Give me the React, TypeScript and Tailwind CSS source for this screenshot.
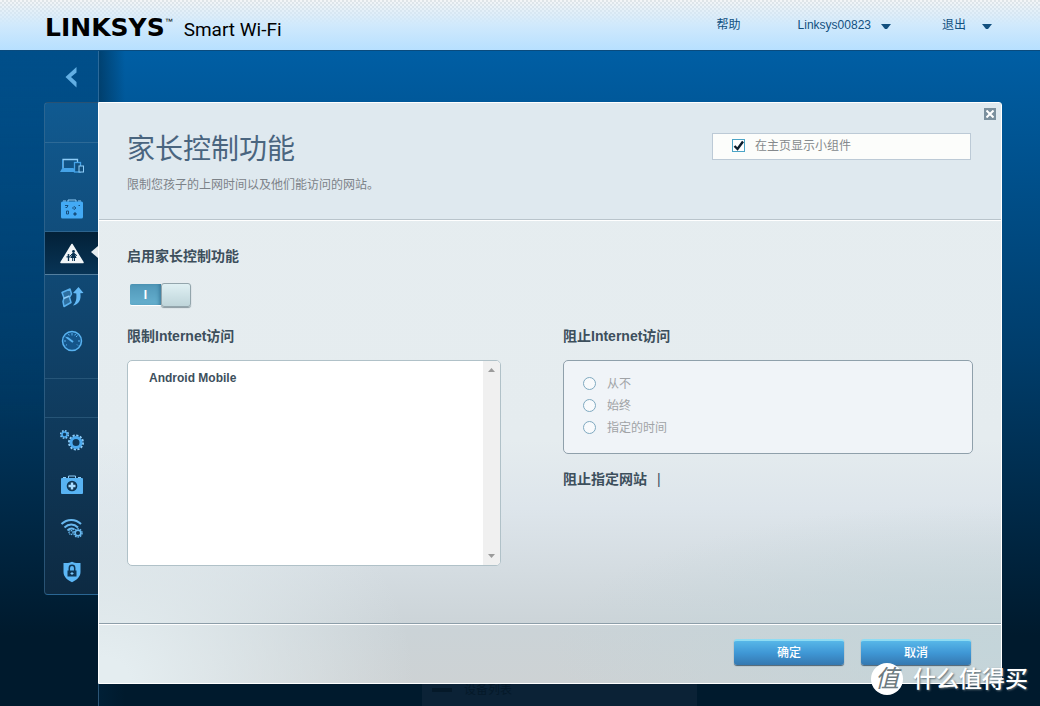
import React, { useState } from 'react';

const ICON = '#45a3e8';
const LIGHT = '#8fcdf8';

const DevicesIcon = () => (
  <svg width="24" height="16" viewBox="0 0 24 16" fill="none" stroke={ICON}>
    <path d="M3 11.500V2.500h14.500V5" stroke={LIGHT} strokeWidth="1.300" />
    <path d="M2.500 3v8.500h11" />
    <path d="M0 15l2-3.500h12V15z" fill={ICON} stroke="none" />
    <rect x="14.500" y="5.500" width="6" height="9.500" fill="#12507f" strokeWidth="1.300" />
    <rect x="19" y="9" width="4.500" height="6" fill="#12507f" stroke={LIGHT} />
  </svg>
);

const SuitcaseIcon = () => (
  <svg width="22" height="20" viewBox="0 0 22 20">
    <path d="M7 3V1h8v2M2 2h3M17 2h3" stroke={LIGHT} fill="none" />
    <rect y="2.500" width="22" height="17" rx="1.500" fill="#43aaf5" />
    <g fill="none" stroke="#164f7f">
      <path d="M4 6.500h3l-1 2H4.500M5.500 12h2v3h-2z" />
      <path d="M13 7.500l2 1.500-2 1.500-1.500-1.500z" />
      <circle cx="14" cy="15" r="1.200" fill="#164f7f" />
      <path d="M17.500 6.500h1.500" />
    </g>
  </svg>
);

const ParentalIcon = () => (
  <svg width="24" height="21" viewBox="0 0 24 21">
    <path d="M12 1.500L23 19.500H1z" fill="#f2f6f8" stroke="#f2f6f8" strokeLinejoin="round" strokeWidth="1.500" />
    <circle cx="13.500" cy="8.500" r="1.400" fill="#07304f" />
    <path d="M12.500 10h2l2 5h-6z" fill="#07304f" />
    <path d="M12.700 15v3M14.500 15v3M12.500 10.500L10 13M14.500 10.500l2.500 2.300" stroke="#07304f" strokeWidth="1" fill="none" />
    <circle cx="8.500" cy="12" r="1" fill="#07304f" />
    <path d="M6.500 13.800h4M8.500 13v5" stroke="#07304f" strokeWidth="1.300" fill="none" />
  </svg>
);

const MediaIcon = () => (
  <svg width="24" height="22" viewBox="0 0 24 22">
    <path d="M2 6.500L10 3l1.500 5-2 3.500 1.500 5-7 4-1-5 1-3.500z" fill="#2d6e9f" stroke="#5ab1ee" strokeWidth="1.500" strokeLinejoin="round" />
    <path d="M3.500 12.500L9.500 10" stroke="#8fcdf8" strokeWidth="1.500" />
    <path d="M18.500 1l5 6-3.200.2c1.200 6-1.300 11-7.300 12.300 3-3 3.800-6.500 3.300-12l-3.300-.5z" fill="#63b9f6" />
  </svg>
);

const SpeedIcon = () => (
  <svg width="22" height="22" viewBox="0 0 22 22" fill="none" stroke="#58b2f0">
    <circle cx="11" cy="11" r="9.500" fill="#15558a" strokeWidth="1.500" />
    <path d="M11 3v2.500M3 11h2M17 11h2M16.500 5.500L15 7M7.500 4l.7 1.500M14.500 4l-.7 1.500M4.500 7l1.500.8M4.800 15.500L6 14.500M17 15.500L16 14.500" />
    <path d="M6 7.500l6 4.500" strokeWidth="2" />
  </svg>
);

const GearsIcon = () => (
  <svg width="24" height="22" viewBox="0 0 24 22" fill="none" stroke="#4ba9ee">
    <circle cx="4.500" cy="5.500" r="3.700" strokeWidth="1.800" strokeDasharray="1.600 1.306" stroke={LIGHT} />
    <circle cx="4.500" cy="5.500" r="2.500" strokeWidth="1.600" />
    <circle cx="16" cy="13.500" r="7" strokeWidth="2" strokeDasharray="2.200 1.465" stroke={LIGHT} />
    <circle cx="16" cy="13.500" r="5" strokeWidth="3" />
  </svg>
);

const FirstAidIcon = () => (
  <svg width="22" height="19" viewBox="0 0 22 19">
    <path d="M7.500 3V1h7v2M2 2.500h3M17 2.500h3" stroke={LIGHT} fill="none" />
    <rect y="3" width="22" height="16" rx="1" fill="#58b3f3" />
    <circle cx="11" cy="11" r="5.300" fill="#0f3655" />
    <path d="M11 7.500v7M7.500 11h7" stroke="#a9dcff" strokeWidth="2.400" />
  </svg>
);

const WifiIcon = () => (
  <svg width="24" height="20" viewBox="0 0 24 20" fill="none" stroke="#68b8ef" strokeWidth="2">
    <path d="M1.500 6c5.500-5.500 14-5.500 19.500 0" />
    <path d="M4.500 9.500c4-4 9.500-4 13.500 0" />
    <path d="M7.500 12.500c2-2 4.500-2.500 7-1" />
    <circle cx="11" cy="14.500" r="2" strokeWidth="1.300" strokeDasharray="1.100 .6" />
    <circle cx="18" cy="15" r="4" strokeWidth="1.500" strokeDasharray="1.600 .92" />
    <circle cx="18" cy="15" r="2.800" strokeWidth="1.500" />
  </svg>
);

const ShieldIcon = () => (
  <svg width="18" height="22" viewBox="0 0 18 22">
    <path d="M.5 2C4 2.300 7 2 9 .8 11 2 14 2.300 17.500 2v9c0 4.500-3.500 8-8.500 10.200C4 19 .5 15.500.5 11z" fill="#5cb7f6" />
    <path d="M6.300 10V7a2.700 2.700 0 0 1 5.400 0v3" fill="none" stroke="#0f3655" strokeWidth="1.500" />
    <rect x="4.500" y="9.500" width="9" height="6" fill="#0f3655" />
    <path d="M9 11v3M7.500 12.500h3" stroke="#7cc8fb" />
  </svg>
);

const Caret = () => (
  <svg width="10" height="5" viewBox="0 0 10 5" className="mt-[2px]">
    <path d="M0 0h10L6 5H4z" fill="#12507f" />
  </svg>
);

const ScrollArrow = ({ down }: { down?: boolean }) => (
  <svg width="7" height="4" viewBox="0 0 7 4">
    <path d={down ? 'M0 0h7L3.500 4z' : 'M0 4h7L3.500 0z'} fill="#9b9b9b" />
  </svg>
);

const APPS = [
  { name: '设备列表', icon: DevicesIcon },
  { name: '访客访问', icon: SuitcaseIcon },
  { name: '家长控制功能', icon: ParentalIcon },
  { name: '媒体优先级', icon: MediaIcon },
  { name: '速度测试', icon: SpeedIcon },
];

const SETTINGS = [
  { name: '连接', icon: GearsIcon },
  { name: '故障排除', icon: FirstAidIcon },
  { name: '无线', icon: WifiIcon },
  { name: '安全', icon: ShieldIcon },
];

const BLOCK_OPTIONS = ['从不', '始终', '指定的时间'];

const NavItem = ({ name, icon: Icon, active }: { name: string; icon: React.FC; active?: boolean }) => (
  <a
    href="#"
    aria-label={name}
    className={
      active
        ? 'relative flex h-11 items-center justify-center border-y border-t-[#2d648e] border-b-[#547f9f] bg-linear-to-b from-[#032138] to-[#083456]'
        : 'flex h-11 items-center justify-center'
    }
  >
    <Icon />
    {active && (
      <svg width="7" height="12" viewBox="0 0 7 12" className="absolute top-[14px] right-0">
        <path d="M7 0v12L0 6z" fill="#e6edf0" />
      </svg>
    )}
  </a>
);

const Header = () => (
  <header className="flex h-[51px] items-center justify-between border-b border-[#0b4b7d] bg-[linear-gradient(#f0f4f700,#d0e9fc_50%,#b7e0ff),repeating-conic-gradient(#dfe4e7_0_25%,#f4f6f7_0_50%)] bg-size-[100%_100%,4px_4px] pr-12 pl-[45px]">
    <div className="flex items-baseline pt-[7px] text-black">
      <span className="font-['DejaVu_Sans'] text-[25px] leading-8 font-bold">LINKSYS</span>
      <span className="mt-[6px] self-start text-[8px] leading-2">™</span>
      <span className="ml-[11px] font-[Roboto] text-[19px] leading-8">Smart Wi-Fi</span>
    </div>
    <nav className="flex items-center text-[12px] leading-4 text-[#12507f]">
      <a href="#">帮助</a>
      <button className="ml-[57px] flex items-center gap-[10px]">
        Linksys00823
        <Caret />
      </button>
      <button className="ml-[51px] flex items-center gap-4">
        退出
        <Caret />
      </button>
    </nav>
  </header>
);

const Sidebar = () => (
  <aside className="flex w-[99px] shrink-0 flex-col border-r border-[#487da6]/60 bg-linear-to-b from-[#002a4d]/30 to-transparent to-60% pl-11">
    <button aria-label="返回" className="flex h-[51px] items-center justify-center">
      <svg width="12" height="22" viewBox="0 0 12 22">
        <path d="M11.500 1v5.500L6 11l5.500 5v5.500L.5 11z" fill="#62afe4" />
      </svg>
    </button>
    <nav className="rounded-l border border-r-0 border-[#3d6f95]/60 bg-linear-to-b from-[#105a91] to-[#0d2a42]">
      <div className="h-10 border-b border-[#3b739d]/70" />
      <div className="border-b border-[#315f82]/70 pb-[15px]">
        {APPS.map(app => (
          <NavItem key={app.name} {...app} active={app.name === '家长控制功能'} />
        ))}
      </div>
      <div className="h-[39px] border-b border-[#315f82]/70" />
      <div>
        {SETTINGS.map(item => (
          <NavItem key={item.name} {...item} />
        ))}
      </div>
    </nav>
  </aside>
);

const DialogButton = ({ children }: { children: React.ReactNode }) => (
  <button className="h-[26px] w-[110px] rounded-[3px] border-t-2 border-[#8fdcf3] bg-linear-to-b from-[#57b7e8] via-[#3f97d5] to-[#3578b0] text-[12px] leading-4 font-medium text-white shadow-[0_1px_1px_#4c6272]">
    {children}
  </button>
);

const ParentalDialog = () => {
  const [showWidget, setShowWidget] = useState(true);
  const [enabled, setEnabled] = useState(true);

  return (
    <section className="relative -ml-px rounded-r-[3px] border border-white bg-[radial-gradient(ellipse_35%_45%_at_0%_100%,#e4edf0_10%,#e4edf000_100%),radial-gradient(ellipse_50%_25%_at_100%_94%,#c4d5da_0%,#c4d5da00_100%),linear-gradient(#e6edf0_0%,#e5ecef_58%,#dde5eb_70%,#cbd3d7_91%,#cdd2d4_100%)]">
      <button aria-label="关闭" className="absolute top-[5px] right-[5px] flex size-3 items-center justify-center bg-[#7b909e]">
        <svg width="8" height="8" viewBox="0 0 8 8" stroke="#fff" strokeWidth="2">
          <path d="M.5.5l7 7M7.500.5l-7 7" />
        </svg>
      </button>

      <div className="flex h-[117px] items-start justify-between border-b border-[#b9c4cb] bg-[#dfe9ef] pr-[30px] pl-7">
        <div className="pt-[27px]">
          <h1 className="text-[28px] leading-10 font-normal text-[#4a657f]">家长控制功能</h1>
          <p className="mt-[7px] text-[12px] leading-4 text-[#7c8288]">限制您孩子的上网时间以及他们能访问的网站。</p>
        </div>
        <label className="mt-[30px] flex h-[27px] w-[259px] items-center border border-[#bccad6] bg-[#fcfdfb] pb-[2px] pl-[19px] text-[12px] leading-4 text-[#85898c]">
          <span className="relative mr-[10px] size-[13px]">
            <input
              type="checkbox"
              checked={showWidget}
              onChange={e => setShowWidget(e.target.checked)}
              className="block size-[13px] appearance-none border border-[#4ba4c6] bg-white"
            />
            {showWidget && (
              <svg viewBox="0 0 13 13" className="pointer-events-none absolute inset-0" fill="none" stroke="#0c1d2c" strokeWidth="2.400">
                <path d="M2.500 7l3 3 5.500-7.500" />
              </svg>
            )}
          </span>
          在主页显示小组件
        </label>
      </div>

      <div className="h-[403px] border-t border-white px-7 pt-[23px] text-[#3d4f5c]">
        <h2 className="text-[14px] leading-6 font-bold">启用家长控制功能</h2>
        <button
          role="switch"
          aria-checked={enabled}
          aria-label="启用家长控制功能"
          onClick={() => setEnabled(!enabled)}
          className="mt-[15px] ml-[3px] flex h-6 w-[61px] items-center"
        >
          <span className="h-[22px] w-[31px] rounded-l-[2px] border-b border-white bg-linear-to-b from-[#5097b8] to-[#66b0cf] text-[12px] leading-[22px] font-bold text-white shadow-[inset_-3px_0_4px_-2px_#2f6f8f]">
            I
          </span>
          <span className="h-[24px] w-[30px] rounded-[3px] border border-[#93a5ac] bg-linear-to-b from-[#dff0f3] to-[#bfd5da] shadow-[0_1px_1px_#8a9aa0]" />
        </button>

        <div className="mt-[17px] grid grid-cols-[374fr_410fr] gap-[62px]">
          <div>
            <h2 className="text-[14px] leading-6 font-bold">限制Internet访问</h2>
            <div className="mt-3 flex h-[206px] overflow-hidden rounded-[5px] border border-[#b0c1c8] bg-white">
              <ul className="flex-1 pt-[9px] pl-[21px]">
                <li className="flex">
                  <button className="text-[12px] leading-4 font-bold">Android Mobile</button>
                </li>
              </ul>
              <div className="flex w-[17px] flex-col items-center justify-between bg-[#f0f0f0] py-[7px]">
                <ScrollArrow />
                <ScrollArrow down />
              </div>
            </div>
          </div>

          <div>
            <h2 className="text-[14px] leading-6 font-bold">阻止Internet访问</h2>
            <fieldset className="mt-3 h-[94px] rounded-[5px] border border-[#8fa0ab] bg-[#f0f4f8] pt-3 pl-[19px]">
              {BLOCK_OPTIONS.map(option => (
                <label key={option} className="flex h-[22px] items-center gap-[11px] text-[12px] leading-4 text-[#a0a3a6]">
                  <input
                    type="radio"
                    name="block"
                    className="mb-[2px] size-[13px] appearance-none rounded-full border border-[#7fa9c0] bg-[#f8fafc]"
                  />
                  {option}
                </label>
              ))}
            </fieldset>
            <h2 className="mt-[13px] flex gap-[10px] text-[14px] leading-6 font-bold">
              阻止指定网站
              <span className="font-normal">|</span>
            </h2>
          </div>
        </div>
      </div>

      <footer className="flex h-[60px] items-start justify-end gap-[17px] border-t border-[#8d9ea9] pt-[15px] pr-[30px] shadow-[inset_0_1px_0_#fff]">
        <DialogButton>确定</DialogButton>
        <DialogButton>取消</DialogButton>
      </footer>
    </section>
  );
};

const App: React.FC = () => (
  <div className="relative flex min-h-screen flex-col overflow-hidden bg-linear-to-b from-[#0064ae] via-[#003d6b] to-[#001a2d] to-90% font-['Liberation_Sans','Noto_Sans_CJK_SC',sans-serif]">
    <Header />
    <div className="flex flex-1">
      <Sidebar />
      <main className="flex min-w-0 flex-1 flex-col bg-linear-to-r from-[#00253f]/50 to-transparent to-[26px] pt-[51px] pr-[38px]">
        <ParentalDialog />
        <div className="ml-[323px] flex h-[22px] w-[275px] items-start gap-3 overflow-hidden bg-[#0b2236] px-[10px] text-[12px] leading-3 text-[#051929]">
          <span className="mt-1 h-1 w-5 bg-[#051929]" />
          设备列表
        </div>
      </main>
    </div>

    {/* watermark */}
    <div className="pointer-events-none absolute right-3 bottom-[11px] flex items-center gap-[10px] text-white">
      <span className="flex size-8 items-center justify-center rounded-full bg-white text-[24px] leading-8 text-[#6d7a80] italic">值</span>
      <span className="text-[23px] leading-8 font-medium [text-shadow:1px_1px_2px_#5c6c75]">什么值得买</span>
    </div>
  </div>
);

export default App;
